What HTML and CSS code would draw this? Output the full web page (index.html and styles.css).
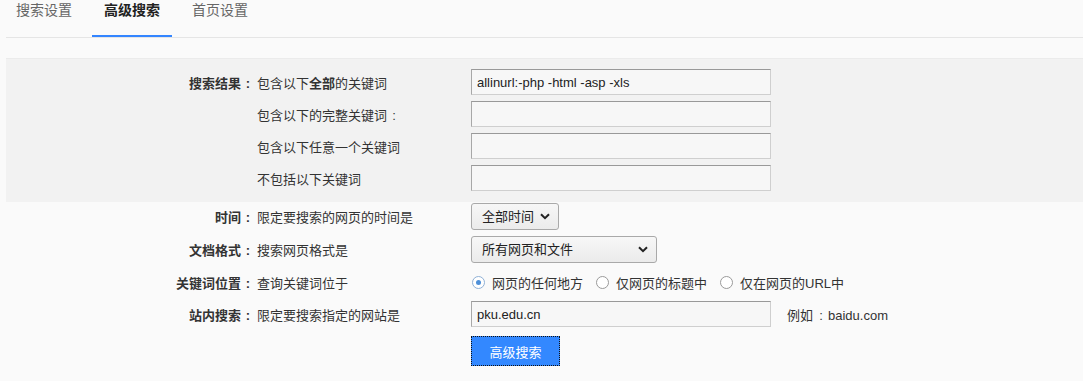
FILE: index.html
```html
<!DOCTYPE html>
<html lang="zh-CN">
<head>
    <meta charset="UTF-8">
    <title>高级搜索</title>
    <link rel="stylesheet" href="styles.css">
</head>
<body>
    <div class="tabs">
        <a class="tab">搜索设置</a>
        <a class="tab active">高级搜索</a>
        <a class="tab">首页设置</a>
    </div>

    <form class="adv">
        <div class="band">
            <div class="row">
                <span class="label">搜索结果<span class="colon">:</span></span>
                <span class="desc">包含以下<b>全部</b>的关键词</span>
                <input class="text-input" type="text" value="allinurl:-php -html -asp -xls">
            </div>
            <div class="row">
                <span class="label"></span>
                <span class="desc">包含以下的完整关键词<span class="colon">:</span></span>
                <input class="text-input" type="text">
            </div>
            <div class="row">
                <span class="label"></span>
                <span class="desc">包含以下任意一个关键词</span>
                <input class="text-input" type="text">
            </div>
            <div class="row">
                <span class="label"></span>
                <span class="desc">不包括以下关键词</span>
                <input class="text-input" type="text">
            </div>
        </div>

        <div class="rest">
            <div class="row tall">
                <span class="label">时间<span class="colon">:</span></span>
                <span class="desc">限定要搜索的网页的时间是</span>
                <span class="select-wrap time">
                    <select class="select">
                        <option>全部时间</option>
                        <option>最近一天</option>
                        <option>最近一周</option>
                    </select>
                    <svg class="chevron" width="10" height="7" viewBox="0 0 10 7"><path d="M1 1.2l4 4 4-4" fill="none" stroke="#222" stroke-width="2"/></svg>
                </span>
            </div>
            <div class="row tall">
                <span class="label">文档格式<span class="colon">:</span></span>
                <span class="desc">搜索网页格式是</span>
                <span class="select-wrap format">
                    <select class="select">
                        <option>所有网页和文件</option>
                        <option>PDF</option>
                    </select>
                    <svg class="chevron" width="10" height="7" viewBox="0 0 10 7"><path d="M1 1.2l4 4 4-4" fill="none" stroke="#222" stroke-width="2"/></svg>
                </span>
            </div>
            <div class="row">
                <span class="label">关键词位置<span class="colon">:</span></span>
                <span class="desc">查询关键词位于</span>
                <span class="radios">
                    <label class="radio"><input type="radio" name="q5" checked>网页的任何地方</label>
                    <label class="radio"><input type="radio" name="q5">仅网页的标题中</label>
                    <label class="radio"><input type="radio" name="q5">仅在网页的URL中</label>
                </span>
            </div>
            <div class="row">
                <span class="label">站内搜索<span class="colon">:</span></span>
                <span class="desc">限定要搜索指定的网站是</span>
                <input class="text-input" type="text" value="pku.edu.cn">
                <span class="hint">例如<span class="colon">:</span>baidu.com</span>
            </div>
            <div class="row submit-row">
                <span class="label"></span>
                <span class="desc"></span>
                <button class="submit" type="button">高级搜索</button>
            </div>
        </div>
    </form>
</body>
</html>
```

FILE: styles.css
```css
body {
    margin: 0;
    background: #fafafa;
    color: #333;
    font-family: "Liberation Sans", "Noto Sans CJK SC", sans-serif;
    font-size: 13px;
}
.tabs {
    display: flex;
    gap: 8px;
    margin-left: 6px;
    border-bottom: 1px solid #e5e5e5;
}
.tab {
    width: 80px;
    text-align: center;
    font-size: 14px;
    line-height: 20px;
    padding-bottom: 15px;
    color: #666;
    border-bottom: 2px solid transparent;
    cursor: pointer;
}
.tab:first-child {
    margin-left: -2px;
}
.tab.active {
    color: #222;
    font-weight: bold;
    border-bottom-color: #3385ff;
}
.adv {
    margin: 20px 0 0 6px;
}
.band {
    background: #f2f2f2;
    border-top: 1px solid #ebebeb;
    padding: 10px 0 11px;
    display: flex;
    flex-direction: column;
    gap: 6px;
}
.rest {
    padding-top: 1px;
    display: flex;
    flex-direction: column;
    gap: 6px;
}
.row {
    display: flex;
    align-items: center;
    height: 26px;
}
.row.tall {
    height: 27px;
}
.row.submit-row {
    height: 30px;
    margin-top: 3px;
}
.label {
    width: 249px;
    text-align: right;
    font-weight: bold;
    flex-shrink: 0;
}
.colon {
    display: inline-block;
    width: 14px;
    text-align: center;
    font-weight: bold;
}
.desc {
    width: 214px;
    padding-left: 2px;
    flex-shrink: 0;
}
.desc b {
    font-weight: bold;
}
.desc .colon {
    font-weight: normal;
}
.text-input {
    box-sizing: border-box;
    width: 300px;
    height: 26px;
    margin: 0;
    padding: 0 5px;
    border: 1px solid;
    border-color: #999 #cfcfcf #cfcfcf #a8a8a8;
    background: #f7f7f7;
    color: #222;
    font-family: "Liberation Sans", "Noto Sans CJK SC", sans-serif;
    font-size: 13px;
}
.hint {
    margin-left: 16px;
}
.hint .colon {
    font-weight: normal;
    margin-left: 1px;
}
.select-wrap {
    position: relative;
    display: inline-block;
}
.select {
    appearance: none;
    -webkit-appearance: none;
    box-sizing: border-box;
    height: 27px;
    margin: 0;
    padding: 0 0 0 10px;
    border: 1px solid #a9a9a9;
    border-radius: 3px;
    background: linear-gradient(#f7f7f7, #ebebeb);
    color: #222;
    font-family: "Liberation Sans", "Noto Sans CJK SC", sans-serif;
    font-size: 13px;
}
.select-wrap.time .select {
    width: 88px;
}
.select-wrap.format .select {
    width: 186px;
}
.chevron {
    position: absolute;
    right: 9px;
    top: 10px;
    pointer-events: none;
}
.radios {
    display: flex;
    align-items: center;
}
.radio {
    display: flex;
    align-items: center;
    margin-right: 12px;
    cursor: pointer;
}
.radio input {
    appearance: none;
    -webkit-appearance: none;
    box-sizing: border-box;
    width: 13px;
    height: 13px;
    margin: 0 7px 0 1px;
    border: 1px solid #9a9a9a;
    border-radius: 50%;
    background: #fff;
    position: relative;
}
.radio input:checked {
    border-color: #8fb0d6;
}
.radio input:checked::after {
    content: "";
    position: absolute;
    left: 3px;
    top: 3px;
    width: 5px;
    height: 5px;
    border-radius: 50%;
    background: #4d8fd8;
}
.submit {
    box-sizing: border-box;
    width: 89px;
    height: 30px;
    margin: 0;
    border: 1px dotted #111;
    background: #3388ff;
    color: #fff;
    font-family: "Liberation Sans", "Noto Sans CJK SC", sans-serif;
    font-size: 13px;
    cursor: pointer;
}
```
